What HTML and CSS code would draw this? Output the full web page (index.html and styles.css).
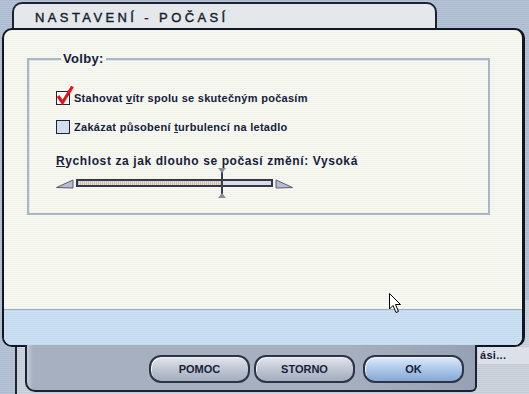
FILE: index.html
```html
<!DOCTYPE html>
<html lang="cs">
<head>
  <meta charset="UTF-8">
  <title>Nastavení - Počasí</title>
  <link rel="stylesheet" href="styles.css">
</head>
<body>
  <div class="desktop">
    <div class="bg-window">
      <span class="bg-label">ási...</span>
    </div>

    <div class="dialog">
      <div class="tab">
        <h1 class="title">NASTAVENÍ - POČASÍ</h1>
      </div>

      <div class="panel">
        <fieldset class="group">
          <legend>Volby:</legend>

          <label class="check-row">
            <span class="box">
              <svg class="tick" width="18" height="20" viewBox="0 0 18 20">
                <path d="M2 11 L6.5 17.5 L16.5 1.5" fill="none" stroke="#e0161c" stroke-width="3.2" stroke-linejoin="miter"/>
              </svg>
            </span>
            <span>Stahovat <u>v</u>ítr spolu se skutečným počasím</span>
          </label>

          <label class="check-row">
            <span class="box empty"></span>
            <span>Zakázat působení <u>t</u>urbulencí na letadlo</span>
          </label>

          <div class="slider-label"><u>R</u>ychlost za jak dlouho se počasí změní: Vysoká</div>

          <div class="slider">
            <svg class="arrow" width="18" height="10" viewBox="0 0 18 10">
              <path d="M0.5 8.5 L17 1 L17 9 Z" fill="#b9bad3" stroke="#5a5e74" stroke-width="1"/>
            </svg>
            <div class="track">
              <div class="fill" style="width: 74%"></div>
              <div class="thumb"></div>
            </div>
            <svg class="arrow" width="18" height="10" viewBox="0 0 18 10">
              <path d="M17.5 8.5 L1 1 L1 9 Z" fill="#b9bad3" stroke="#5a5e74" stroke-width="1"/>
            </svg>
          </div>
        </fieldset>

        <div class="band"></div>
      </div>

      <div class="button-bar">
        <button class="btn">POMOC</button>
        <button class="btn">STORNO</button>
        <button class="btn btn-ok">OK</button>
      </div>
    </div>

    <svg class="cursor" width="14" height="21" viewBox="0 0 14 21">
      <path d="M0.5 0.5 L0.5 16 L4 12.5 L7 19.5 L9.5 18.5 L6.5 11.5 L11.5 11.5 Z" fill="#fff" stroke="#000" stroke-width="1"/>
    </svg>
  </div>
</body>
</html>
```

FILE: styles.css
```css
* {
  margin: 0;
  padding: 0;
  box-sizing: border-box;
}

body {
  width: 529px;
  height: 394px;
  overflow: hidden;
  font-family: 'Liberation Sans', Arial, sans-serif;
  color: #15213a;
}

.desktop {
  position: relative;
  width: 529px;
  height: 394px;
  background: repeating-linear-gradient(180deg, #aab9cd 0, #aab9cd 1px, #b9c6d7 1px, #b9c6d7 2px);
}

/* window behind the dialog */
.bg-window {
  position: absolute;
  left: 15px;
  top: 300px;
  right: 0;
  bottom: 0;
  border-left: 2px solid #1e2430;
  background: repeating-linear-gradient(180deg, #c2cad6 0, #c2cad6 1px, #cfd6e0 1px, #cfd6e0 2px);
  padding: 47px 0 0 461px;
}

.bg-label {
  display: block;
  width: 52px;
  height: 17px;
  padding: 2px 0 0 2px;
  background: #dce0e8;
  font-size: 11px;
  font-weight: bold;
  letter-spacing: 0.3px;
}

.dialog {
  position: absolute;
  left: 2px;
  top: 2px;
  width: 524px;
}

.tab {
  margin-left: 10px;
  width: 425px;
  height: 28px;
  border: 2px solid #1b2230;
  border-bottom: none;
  border-radius: 10px 10px 0 0;
  background: #e5e8eb;
  padding: 6px 0 0 21px;
}

.title {
  font-size: 13px;
  line-height: 15px;
  font-weight: normal;
  letter-spacing: 3.4px;
  color: #161d2a;
  -webkit-text-stroke: 0.4px #161d2a;
}

.panel {
  margin-top: -2px;
  width: 523px;
  height: 319px;
  border: 2px solid #121620;
  border-right-width: 3px;
  border-radius: 10px;
  background: repeating-linear-gradient(180deg, #f0f2e9 0, #f0f2e9 1px, #f8f9f3 1px, #f8f9f3 2px);
  display: flex;
  flex-direction: column;
  overflow: hidden;
}

.group {
  margin: 22px 0 0 23px;
  width: 463px;
  border: 2px solid #a9b7c2;
  box-shadow: inset 1px 1px 0 #dde5ea;
  padding: 25px 0 19px 27px;
}

.group legend {
  margin-left: 5px;
  padding: 0 2px;
  font-size: 13px;
  line-height: 14px;
  font-weight: bold;
  letter-spacing: 0.3px;
}

.check-row {
  display: flex;
  align-items: center;
  gap: 4px;
  height: 14px;
  margin-bottom: 15px;
  font-size: 11px;
  font-weight: bold;
  letter-spacing: 0.28px;
}

.box {
  position: relative;
  width: 14px;
  height: 14px;
  border: 1px solid #1e2432;
  background: #fff;
  flex-shrink: 0;
}

.box.empty {
  background: #cfe0f3;
}

.tick {
  position: absolute;
  left: -1px;
  top: -7px;
}

.slider-label {
  margin-top: 20px;
  font-size: 12px;
  line-height: 14px;
  font-weight: bold;
  letter-spacing: 0.6px;
}

.slider {
  margin-top: 4px;
  display: flex;
  align-items: center;
  gap: 2px;
  height: 22px;
}

.arrow {
  margin-top: 2px;
}

.track {
  position: relative;
  width: 197px;
  height: 8px;
  border: 2px solid #333849;
  background: #dcdce9;
}

.fill {
  height: 100%;
  background: repeating-linear-gradient(90deg, #cbbfb3 0, #cbbfb3 1px, #e6ddd3 1px, #e6ddd3 2px);
}

.thumb {
  position: absolute;
  left: 143px;
  top: -9px;
  width: 2px;
  height: 22px;
  background: #3a3f50;
}

.thumb::before,
.thumb::after {
  content: '';
  position: absolute;
  left: -3px;
  border-left: 4px solid transparent;
  border-right: 4px solid transparent;
}

.thumb::before {
  top: -4px;
  border-top: 5px solid #8a8e9c;
}

.thumb::after {
  bottom: -4px;
  border-bottom: 5px solid #8a8e9c;
}

.band {
  margin-top: auto;
  height: 36px;
  border-top: 1px solid #9aaec6;
  background: repeating-linear-gradient(180deg, #c3d9f0 0, #c3d9f0 1px, #cce0f4 1px, #cce0f4 2px);
}

.button-bar {
  margin: -2px 0 0 23px;
  width: 452px;
  height: 47px;
  border: 2px solid #1b2230;
  border-top: none;
  border-radius: 0 0 6px 10px;
  background: linear-gradient(90deg, #c4ccd8 0, #a6b0c0 6px, #a6b0c0 70%, #96a2b4 100%);
  display: flex;
  justify-content: flex-end;
  padding: 10px 11px 0 0;
}

.btn {
  width: 101px;
  height: 28px;
  margin-left: 4px;
  border: 2px solid #2c3446;
  border-radius: 12px;
  background: linear-gradient(180deg, #e2e6ee 0, #c4cad6 45%, #a2acbe 100%);
  box-shadow: inset 1px 1px 0 #f2f4f8;
  font-family: 'Liberation Sans', Arial, sans-serif;
  font-size: 11px;
  font-weight: bold;
  color: #16223a;
}

.btn-ok {
  margin-left: 8px;
  background: linear-gradient(180deg, #dceafa 0, #b2cbeb 45%, #86a8d6 100%);
}

.cursor {
  position: absolute;
  left: 389px;
  top: 293px;
}
```
